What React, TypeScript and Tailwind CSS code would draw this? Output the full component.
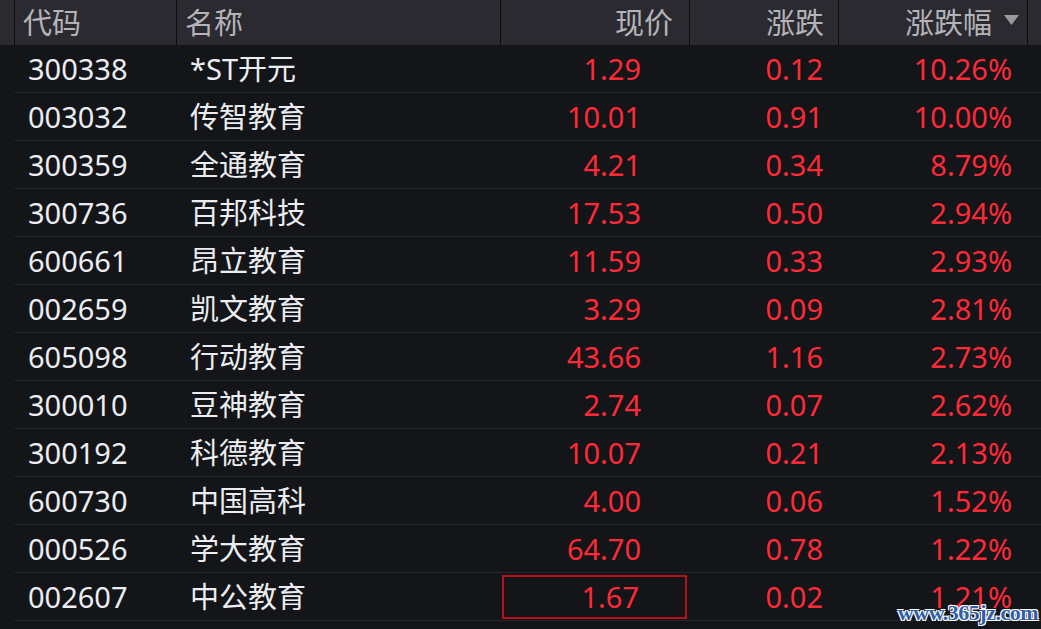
import React from 'react';

type Row = { code: string; name: string; price: string; change: string; pct: string };

const rows: Row[] = [
    { code: '300338', name: '*ST开元', price: '1.29', change: '0.12', pct: '10.26%' },
    { code: '003032', name: '传智教育', price: '10.01', change: '0.91', pct: '10.00%' },
    { code: '300359', name: '全通教育', price: '4.21', change: '0.34', pct: '8.79%' },
    { code: '300736', name: '百邦科技', price: '17.53', change: '0.50', pct: '2.94%' },
    { code: '600661', name: '昂立教育', price: '11.59', change: '0.33', pct: '2.93%' },
    { code: '002659', name: '凯文教育', price: '3.29', change: '0.09', pct: '2.81%' },
    { code: '605098', name: '行动教育', price: '43.66', change: '1.16', pct: '2.73%' },
    { code: '300010', name: '豆神教育', price: '2.74', change: '0.07', pct: '2.62%' },
    { code: '300192', name: '科德教育', price: '10.07', change: '0.21', pct: '2.13%' },
    { code: '600730', name: '中国高科', price: '4.00', change: '0.06', pct: '1.52%' },
    { code: '000526', name: '学大教育', price: '64.70', change: '0.78', pct: '1.22%' },
    { code: '002607', name: '中公教育', price: '1.67', change: '0.02', pct: '1.21%' },
];

export default function App() {
    return (
        <div
            className="relative w-[1041px] h-[629px] overflow-hidden bg-[#131519] text-[29px] leading-none"
            style={{ fontFamily: '"Noto Sans", "Noto Sans CJK SC", sans-serif' }}
        >
            {/* header */}
            <div className="flex h-[45px] bg-[#2a2a30] text-[#b4b4b8]">
                <div className="w-[14px]" />
                <div className="w-[162px] border-l border-[#0c0c0e] flex items-center pl-[8px]">代码</div>
                <div className="w-[324px] border-l border-[#0c0c0e] flex items-center pl-[8px]">名称</div>
                <div className="w-[189px] border-l border-[#0c0c0e] flex items-center justify-end pr-[16px]">现价</div>
                <div className="w-[149px] border-l border-[#0c0c0e] flex items-center justify-end pr-[14px]">涨跌</div>
                <div className="w-[189px] border-l border-[#0c0c0e] flex items-center justify-end pr-[8px] gap-[12px]">
                    <span>涨跌幅</span>
                    <svg width="15" height="10" viewBox="0 0 15 10" className="mt-[-6px]">
                        <polygon points="0,0 15,0 7.5,10" fill="#9a9a9e" />
                    </svg>
                </div>
                <div className="flex-1 border-l border-[#0c0c0e]" />
            </div>

            {/* rows */}
            {rows.map((r, i) => (
                <div key={r.code} className="flex h-[48px]">
                    <div className="w-[14px]" />
                    <div className="flex flex-1 border-b border-[#24262b]">
                        <div className="w-[162px] flex items-center pl-[14px] text-[#ecedf0]">{r.code}</div>
                        <div className="w-[324px] flex items-center pl-[14px] text-[#ecedf0]">{r.name}</div>
                        <div className="w-[189px] flex items-center justify-end pr-[48px] text-[#ff2a37]">
                            {i === rows.length - 1 ? (
                                <div className="w-[186px] h-[44px] ml-[2px] mr-[-46px] border-2 border-[#b8101d] flex items-center justify-end pr-[46px]">
                                    {r.price}
                                </div>
                            ) : (
                                r.price
                            )}
                        </div>
                        <div className="w-[149px] flex items-center justify-end pr-[15px] text-[#ff2a37]">{r.change}</div>
                        <div className="w-[189px] flex items-center justify-end pr-[15px] text-[#ff2a37]">{r.pct}</div>
                    </div>
                </div>
            ))}

            {/* watermark */}
            <div
                className="absolute right-[3px] bottom-[5px] text-[22px] font-bold text-[#2f5fa8] tracking-[-0.5px]"
                style={{
                    fontFamily: '"Liberation Serif", serif',
                    textShadow: '1px 1px 0 #fff, -1px -1px 0 #fff, 1px -1px 0 #fff, -1px 1px 0 #fff',
                }}
            >
                www.365jz.com
            </div>
        </div>
    );
}
